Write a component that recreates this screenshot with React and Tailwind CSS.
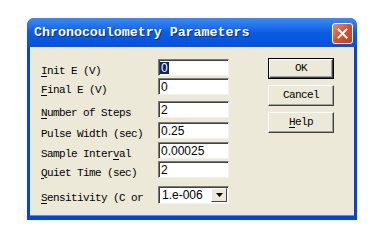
const mono = { fontFamily: '"Liberation Mono", "DejaVu Sans Mono", monospace' };

function Label({ pre = '', u = '', post = '' }) {
  return (
    <span className="text-[11px] tracking-[-0.6px] text-black whitespace-nowrap" style={mono}>
      {pre}
      {u && <span className="underline underline-offset-2">{u}</span>}
      {post}
    </span>
  );
}

function Field({ children }) {
  return (
    <div className="w-[71px] h-[17px] bg-white border border-t-[#7a7a7a] border-l-[#7a7a7a] border-b-[#f2f1ea] border-r-[#f2f1ea] shadow-[inset_1px_1px_0_#404040] pl-[2px] flex items-center text-[12px] leading-none text-black font-['Liberation_Sans',sans-serif]">
      {children}
    </div>
  );
}

function Button({ children, primary }) {
  return (
    <div className={`w-[66px] h-[21px] flex items-center justify-center bg-[#ece9d8] ${primary ? 'border border-black' : ''}`}>
      <div className="w-full h-full border border-t-white border-l-white border-b-[#404040] border-r-[#404040] shadow-[inset_-1px_-1px_0_#a0a0a0] flex items-center justify-center">
        {children}
      </div>
    </div>
  );
}

export default function App() {
  return (
    <div className="w-[382px] h-[244px] bg-white pt-[18px] pl-[27px]">
      <div className="w-[330px] h-[202px] rounded-t-[7px] bg-[#0843d8] flex flex-col overflow-hidden">
        <div className="h-[29px] shrink-0 rounded-t-[7px] bg-gradient-to-b from-[#3b8cf6] via-[#0a5de3] to-[#0550e0] flex items-center pl-[7px] pr-[4px]">
          <span className="text-[13.3px] font-bold text-white tracking-[0px] [text-shadow:1px_1px_0_#0a2a8a]" style={mono}>
            Chronocoulometry Parameters
          </span>
          <div className="ml-auto mt-[1px] w-[21px] h-[21px] rounded-[3px] border border-white bg-gradient-to-br from-[#e88a6c] via-[#d8502c] to-[#c2401c] flex items-center justify-center">
            <svg width="11" height="11" viewBox="0 0 11 11">
              <path d="M1.5 1.5 L9.5 9.5 M9.5 1.5 L1.5 9.5" stroke="white" strokeWidth="2" strokeLinecap="square" />
            </svg>
          </div>
        </div>
        <div className="flex-1 mx-[3px] mb-[4px] bg-[#ece9d8] flex pl-[11px] pt-[12px] border-b border-b-[#5b8ef0]">
          <div className="flex flex-col w-[188px]">
            <div className="flex items-center h-[17px]">
              <div className="w-[117px]"><Label u="I" post="nit E (V)" /></div>
              <Field><span className="bg-[#0a246a] text-white px-[1px] -ml-[1px]">0</span></Field>
            </div>
            <div className="flex items-center h-[17px] mt-[2px]">
              <div className="w-[117px]"><Label u="F" post="inal E (V)" /></div>
              <Field>0</Field>
            </div>
            <div className="flex items-center h-[17px] mt-[6px]">
              <div className="w-[117px]"><Label u="N" post="umber of Steps" /></div>
              <Field>2</Field>
            </div>
            <div className="flex items-center h-[17px] mt-[4px]">
              <div className="w-[117px]"><Label pre="Pulse Width (sec)" /></div>
              <Field>0.25</Field>
            </div>
            <div className="flex items-center h-[17px] mt-[3px]">
              <div className="w-[117px]"><Label pre="Sample Inter" u="v" post="al" /></div>
              <Field>0.00025</Field>
            </div>
            <div className="flex items-center h-[17px] mt-[2px]">
              <div className="w-[117px]"><Label u="Q" post="uiet Time (sec)" /></div>
              <Field>2</Field>
            </div>
            <div className="flex items-center h-[18px] mt-[8px]">
              <div className="w-[117px]"><Label u="S" post="ensitivity (C or" /></div>
              <div className="w-[71px] h-[18px] bg-white border border-t-[#7a7a7a] border-l-[#7a7a7a] border-b-[#f2f1ea] border-r-[#f2f1ea] shadow-[inset_1px_1px_0_#404040] flex items-center">
                <span className="flex-1 pl-[3px] text-[12px] leading-none text-black font-['Liberation_Sans',sans-serif]">1.e-006</span>
                <div className="w-[16px] h-[14px] mr-[1px] bg-[#ece9d8] border border-t-white border-l-white border-b-[#404040] border-r-[#404040] flex items-center justify-center">
                  <svg width="7" height="4" viewBox="0 0 7 4"><path d="M0 0 H7 L3.5 4 Z" fill="black" /></svg>
                </div>
              </div>
            </div>
          </div>
          <div className="flex flex-col ml-[39px] -mt-[1px] gap-[6px]">
            <Button primary><Label pre="OK" /></Button>
            <Button><Label pre="Cancel" /></Button>
            <Button><Label u="H" post="elp" /></Button>
          </div>
        </div>
      </div>
    </div>
  );
}
